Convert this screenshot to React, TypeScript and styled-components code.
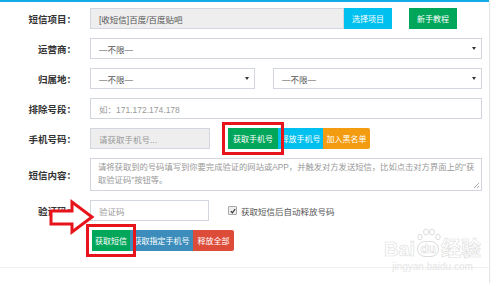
import React from 'react';
import styled, { createGlobalStyle, css } from 'styled-components';

const GlobalStyle = createGlobalStyle`
  html, body {
    margin: 0;
    padding: 0;
    background: #fff;
  }
  body {
    font-family: "Liberation Sans", "Noto Sans CJK SC", sans-serif;
    font-size: 9px;
    color: #555;
  }
`;

const Panel = styled.div`
  position: relative;
  width: 489px;
  height: 283px;
  box-sizing: border-box;
  border-top: 2px solid #13ace6;
  background: #fff;
  box-shadow: 1px 1px 1px rgba(0, 0, 0, 0.1);
`;

const Form = styled.div`
  padding-top: 6px;
  display: flex;
  flex-direction: column;
  gap: 9px;
`;

const Row = styled.div<{ $h?: number }>`
  display: flex;
  align-items: center;
  height: ${(p) => p.$h || 21}px;
`;

const Label = styled.div`
  width: 90px;
  box-sizing: border-box;
  padding-right: 14px;
  text-align: right;
  font-weight: 700;
  color: #333;
  font-size: 9.5px;
  white-space: nowrap;
  flex-shrink: 0;
`;

const Field = styled.div<{ $w: number; $disabled?: boolean; $ml?: number }>`
  width: ${(p) => p.$w}px;
  height: 21px;
  box-sizing: border-box;
  border: 1px solid #d2d6de;
  background: ${(p) => (p.$disabled ? '#eee' : '#fff')};
  margin-left: ${(p) => p.$ml || 0}px;
  display: flex;
  align-items: center;
  padding: 0 8px;
  font-size: 8.5px;
  color: #555;
  flex-shrink: 0;
`;

const Placeholder = styled.span`
  color: #999;
`;

const Select = styled(Field)`
  justify-content: space-between;
  &::after {
    content: '';
    border-left: 2.5px solid transparent;
    border-right: 2.5px solid transparent;
    border-top: 3px solid #333;
    margin-right: -3px;
  }
`;

const TextArea = styled.div`
  position: relative;
  width: 392px;
  height: 33px;
  box-sizing: border-box;
  border: 1px solid #d2d6de;
  padding: 2px 2px 2px 7px;
  font-size: 8.3px;
  line-height: 13px;
  color: #999;
  &::after {
    content: '';
    position: absolute;
    right: 2px;
    bottom: 2px;
    width: 5px;
    height: 5px;
    background: linear-gradient(135deg, transparent 45%, #aaa 45%, #aaa 55%, transparent 55%, transparent 75%, #aaa 75%, #aaa 85%, transparent 85%);
  }
`;

const colors = {
  green: '#00a65a',
  aqua: '#00c0ef',
  orange: '#f39c12',
  blue: '#3c8dbc',
  red: '#dd4b39',
};

const Button = styled.div<{ $c: keyof typeof colors; $w: number; $hl?: boolean; $ml?: number }>`
  width: ${(p) => p.$w}px;
  height: 21px;
  margin-left: ${(p) => p.$ml || 0}px;
  background: ${(p) => colors[p.$c]};
  color: #fff;
  font-size: 8px;
  display: flex;
  align-items: center;
  justify-content: center;
  white-space: nowrap;
  flex-shrink: 0;
  ${(p) =>
    p.$hl &&
    css`
      outline: 3px solid #e8141b;
      outline-offset: 3px;
      position: relative;
      z-index: 1;
    `}
`;

const ButtonGroup = styled.div<{ $ml: number }>`
  display: flex;
  margin-left: ${(p) => p.$ml}px;
  & > :last-child {
    border-radius: 0 2px 2px 0;
  }
`;

const Check = styled.label`
  display: flex;
  align-items: center;
  gap: 4px;
  margin-left: 19px;
  font-size: 8.5px;
  color: #555;
`;

const Box = styled.span`
  width: 7px;
  height: 7px;
  border: 1px solid #aaa;
  border-radius: 1px;
  background: #eee;
  display: flex;
  align-items: center;
  justify-content: center;
`;

const Arrow = styled.svg`
  position: absolute;
  left: 49px;
  top: 197px;
  z-index: 2;
`;

const Footer = styled.div`
  position: absolute;
  left: 0;
  right: 0;
  top: 265px;
  border-top: 1px solid #f0f0f0;
`;

const Watermark = styled.div`
  position: absolute;
  left: 384px;
  top: 236px;
  display: flex;
  flex-direction: column;
  align-items: center;
  pointer-events: none;
  z-index: 3;
`;

const WmTop = styled.div`
  display: flex;
  align-items: flex-end;
  color: transparent;
  -webkit-text-stroke: 0.6px #dcdcdc;
  font-size: 20px;
  font-weight: 700;
  line-height: 22px;
`;

const Paw = styled.span`
  position: relative;
  margin: 0 2px;
  padding: 0 2px;
  border: 1px solid #dcdcdc;
  border-radius: 8px;
  font-size: 13px;
  line-height: 14px;
  margin-bottom: 3px;
`;

const Toes = styled.svg`
  position: absolute;
  left: -1px;
  top: -14px;
`;

const WmBottom = styled.div`
  font-size: 10px;
  color: #e6e6e6;
  line-height: 13px;
`;

export default function App() {
  return (
    <>
      <GlobalStyle />
      <Panel>
        <Form>
          <Row>
            <Label>短信项目：</Label>
            <Field $w={254} $disabled>[收短信]百度/百度贴吧</Field>
            <Button $c="aqua" $w={48}>选择项目</Button>
            <Button $c="green" $w={48} $ml={17}>新手教程</Button>
          </Row>
          <Row>
            <Label>运营商：</Label>
            <Select $w={392}>—不限—</Select>
          </Row>
          <Row>
            <Label>归属地：</Label>
            <Select $w={165}>—不限—</Select>
            <Select $w={209} $ml={18}>—不限—</Select>
          </Row>
          <Row>
            <Label>排除号段：</Label>
            <Field $w={392}>
              <Placeholder>如：171.172.174.178</Placeholder>
            </Field>
          </Row>
          <Row>
            <Label>手机号码：</Label>
            <Field $w={120} $disabled>
              <Placeholder>请获取手机号...</Placeholder>
            </Field>
            <ButtonGroup $ml={18}>
              <Button $c="green" $w={50} $hl>获取手机号</Button>
              <Button $c="aqua" $w={45}>释放手机号</Button>
              <Button $c="orange" $w={47}>加入黑名单</Button>
            </ButtonGroup>
          </Row>
          <Row $h={33}>
            <Label>短信内容：</Label>
            <TextArea>
              请将获取到的号码填写到你要完成验证的网站或APP，并触发对方发送短信，比如点击对方界面上的"获取验证码"按钮等。
            </TextArea>
          </Row>
          <Row>
            <Label>验证码：</Label>
            <Field $w={119}>
              <Placeholder>验证码</Placeholder>
            </Field>
            <Check>
              <Box>
                <svg width="6" height="6" viewBox="0 0 6 6">
                  <path d="M0.8 3.2 L2.4 4.8 L5.2 1" stroke="#333" strokeWidth="1.2" fill="none" />
                </svg>
              </Box>
              获取短信后自动释放号码
            </Check>
          </Row>
          <Row>
            <ButtonGroup $ml={92}>
              <Button $c="green" $w={38} $hl>获取短信</Button>
              <Button $c="blue" $w={63}>获取指定手机号</Button>
              <Button $c="red" $w={41}>释放全部</Button>
            </ButtonGroup>
          </Row>
        </Form>
        <Arrow width="46" height="36" viewBox="0 0 46 36">
          <polygon
            points="2,12 23,12 23,3 43,18 23,33 23,25 2,25"
            fill="#fff"
            stroke="#e8141b"
            strokeWidth="3"
            strokeLinejoin="miter"
          />
        </Arrow>
        <Footer />
        <Watermark>
          <WmTop>
            Bai
            <Paw>
              du
              <Toes width="24" height="14" viewBox="0 0 24 14">
                <g fill="none" stroke="#dcdcdc" strokeWidth="1">
                  <ellipse cx="3" cy="9" rx="2.2" ry="2.8" />
                  <ellipse cx="9" cy="4" rx="2.4" ry="3" />
                  <ellipse cx="15" cy="4" rx="2.4" ry="3" />
                  <ellipse cx="21" cy="9" rx="2.2" ry="2.8" />
                </g>
              </Toes>
            </Paw>
            经验
          </WmTop>
          <WmBottom>jingyan.baidu.com</WmBottom>
        </Watermark>
      </Panel>
    </>
  );
}
